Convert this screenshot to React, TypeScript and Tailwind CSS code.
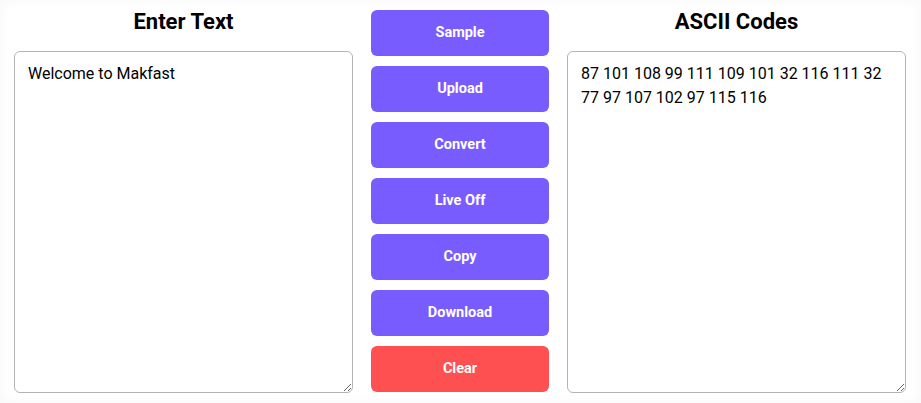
import React from "react";

const buttons = ["Sample", "Upload", "Convert", "Live Off", "Copy", "Download"];

export default function App() {
  return (
    <div
      className="w-[921px] h-[403px] bg-white shadow-[inset_0_0_14px_rgba(0,0,0,0.035)] flex gap-[18px] pl-[14px] pr-[15px] pt-[10px] pb-[10px] text-black"
      style={{ fontFamily: "Roboto, 'Liberation Sans', sans-serif" }}
    >
      <div className="flex-1 flex flex-col">
        <h2 className="text-[22px] font-bold leading-[24px] text-center h-[41px]">Enter Text</h2>
        <textarea
          className="flex-1 w-full rounded-[6px] border border-[#b3b3b3] px-[13px] pt-[10px] pb-[12px] text-[16px] leading-[24px] outline-none bg-white"
          defaultValue="Welcome to Makfast"
        />
      </div>
      <div className="w-[178px] flex flex-col gap-[10px] pb-[1px]">
        {buttons.map((b) => (
          <button
            key={b}
            className="h-[46px] rounded-[6px] bg-[#785cfe] text-white text-[14.5px] font-bold"
          >
            {b}
          </button>
        ))}
        <button className="h-[46px] rounded-[6px] bg-[#fe5050] text-white text-[14.5px] font-bold">
          Clear
        </button>
      </div>
      <div className="flex-1 flex flex-col">
        <h2 className="text-[22px] font-bold leading-[24px] text-center h-[41px]">ASCII Codes</h2>
        <textarea
          className="flex-1 w-full rounded-[6px] border border-[#b3b3b3] px-[13px] pt-[10px] pb-[12px] text-[16px] leading-[24px] outline-none bg-white"
          readOnly
          defaultValue="87 101 108 99 111 109 101 32 116 111 32 77 97 107 102 97 115 116"
        />
      </div>
    </div>
  );
}
